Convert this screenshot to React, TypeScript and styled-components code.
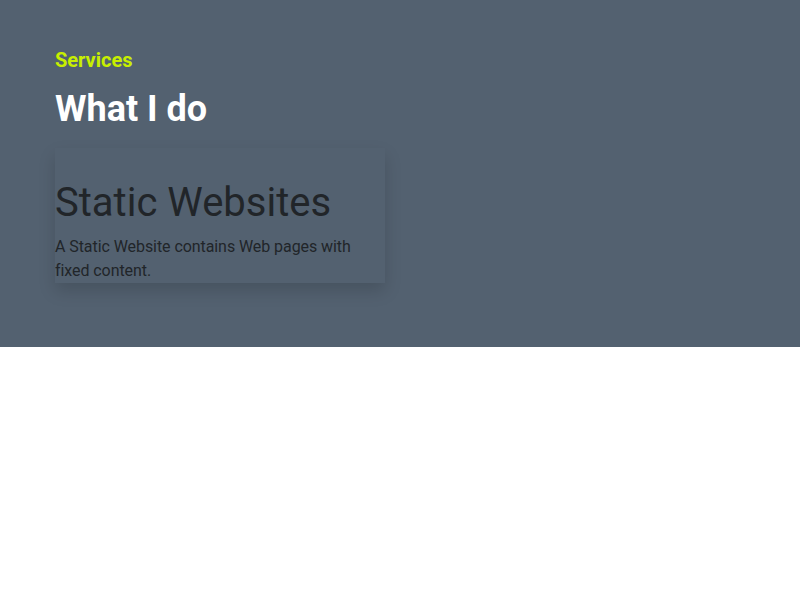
import React from "react";
import styled, { createGlobalStyle } from "styled-components";

const Global = createGlobalStyle`
  html, body { margin: 0; padding: 0; background: #ffffff; }
  body { font-family: Roboto, "Noto Sans", "Liberation Sans", sans-serif; color: #212529; }
  * { box-sizing: border-box; }
`;

const Section = styled.section`
  background: #536170;
  padding: 48px 55px 64px;
`;

const Eyebrow = styled.h3`
  margin: 0;
  font-size: 20px;
  line-height: 24px;
  font-weight: 700;
  color: #c8ef00;
`;

const Heading = styled.h2`
  margin: 16px 0 0;
  font-size: 36px;
  line-height: 43px;
  font-weight: 700;
  color: #ffffff;
`;

const Card = styled.div`
  width: 330px;
  margin-top: 17px;
  padding-top: 33px;
  background: #536170;
  box-shadow: 0 8px 16px rgba(0, 0, 0, 0.15);
`;

const CardTitle = styled.h4`
  margin: 0 0 10px;
  font-size: 40px;
  line-height: 44px;
  font-weight: 400;
  color: #212529;
`;

const CardText = styled.p`
  margin: 0;
  font-size: 16px;
  line-height: 24px;
  letter-spacing: -0.07px;
  color: #212529;
`;

export default function App() {
  return (
    <>
      <Global />
      <Section>
        <Eyebrow>Services</Eyebrow>
        <Heading>What I do</Heading>
        <Card>
          <CardTitle>Static Websites</CardTitle>
          <CardText>A Static Website contains Web pages with fixed content.</CardText>
        </Card>
      </Section>
    </>
  );
}
